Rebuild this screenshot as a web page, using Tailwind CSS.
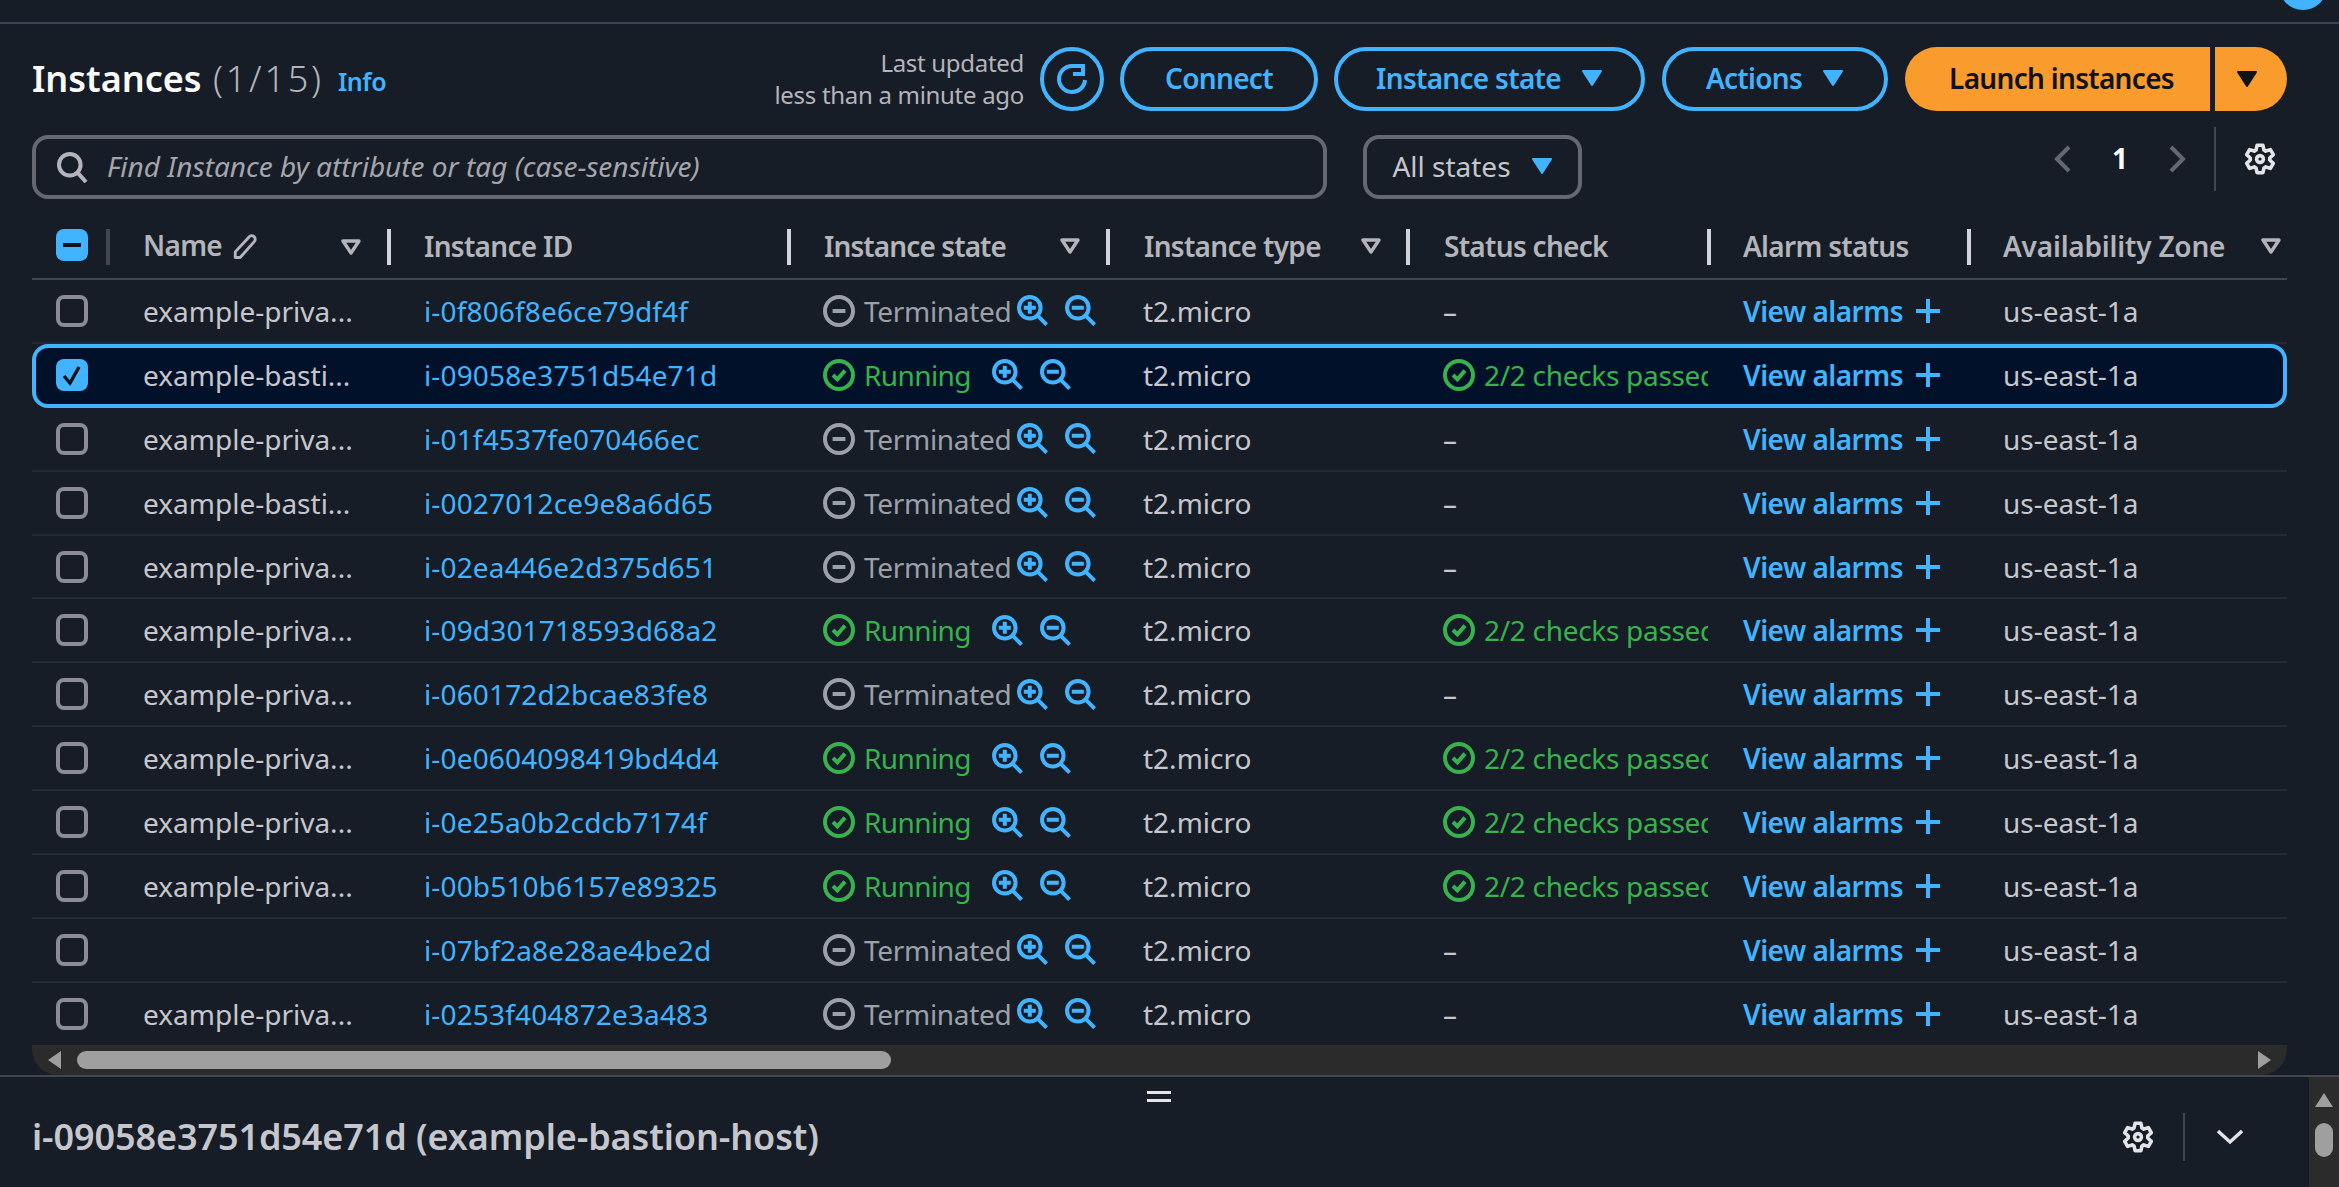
<!DOCTYPE html>
<html lang="en">
<head>
    <meta charset="UTF-8">
    <title>Instances</title>
    <script src="https://cdn.jsdelivr.net/npm/@tailwindcss/browser@4"></script>
</head>
<body class="bg-[#161d26]">
<div class="relative h-[1187px] w-[2339px] overflow-hidden bg-[#161d26] font-['Noto_Sans',sans-serif] text-[28px] text-[#c6c6cd]">
    <div class="absolute right-[12px] top-[-38px] h-[48px] w-[48px] rounded-full bg-[#42b4ff]"></div>
    <div class="h-[24px] border-b-2 border-[#3f4450]"></div>

    <!-- page header -->
    <div class="mt-[23px] flex h-[64px] items-center pl-[32px] pr-[52px]">
        <h1 class="text-[36px] font-semibold text-[#fbfbfb]">Instances <span class="ml-[2px] font-light tracking-[2.8px] text-[#b4b4bb]">(1/15)</span></h1>
        <a class="ml-[14px] mt-[6px] text-[25px] font-semibold tracking-[-0.4px] text-[#42b4ff]">Info</a>
        <div class="ml-auto text-right text-[24px] leading-[32px] tracking-[-0.3px] text-[#b4b4bb]">Last updated<br>less than a minute ago</div>
        <button class="ml-[16px] flex h-[64px] w-[64px] items-center justify-center rounded-full border-4 border-[#42b4ff]">
            <svg class="h-[32px] w-[32px]" viewBox="0 0 16 16" fill="none" stroke="#42b4ff" stroke-width="2"><path d="M14.5 8.5A6.5 6.5 0 1 1 8 1.5h5.5"/><path d="M13.5 0.5v5h-5"/></svg>
        </button>
        <button class="ml-[16px] h-[64px] w-[198px] rounded-full border-4 border-[#42b4ff] pb-[2px] font-semibold tracking-[-0.7px] text-[#42b4ff]">Connect</button>
        <button class="ml-[16px] flex h-[64px] w-[311px] items-center justify-center gap-[20px] rounded-full border-4 border-[#42b4ff] pb-[2px] font-semibold tracking-[-0.7px] text-[#42b4ff]">Instance state <svg class="h-[16px] w-[22px]" viewBox="0 0 22 16"><path d="M2 1h18L11 15z" fill="#42b4ff" stroke="#42b4ff" stroke-width="2" stroke-linejoin="round"/></svg></button>
        <button class="ml-[17px] flex h-[64px] w-[226px] items-center justify-center gap-[20px] rounded-full border-4 border-[#42b4ff] pb-[2px] font-semibold tracking-[-0.7px] text-[#42b4ff]">Actions <svg class="h-[16px] w-[22px]" viewBox="0 0 22 16"><path d="M2 1h18L11 15z" fill="#42b4ff" stroke="#42b4ff" stroke-width="2" stroke-linejoin="round"/></svg></button>
        <button class="ml-[17px] h-[64px] w-[305px] rounded-l-full bg-[#fa9b2d] pb-[2px] pl-[8px] font-semibold tracking-[-0.7px] text-[#0f141a]">Launch instances</button>
        <button class="ml-[5px] flex h-[64px] w-[72px] items-center justify-center rounded-r-full bg-[#fa9b2d] pr-[8px]"><svg class="h-[16px] w-[22px]" viewBox="0 0 22 16"><path d="M2 1h18L11 15z" fill="#0f141a" stroke="#0f141a" stroke-width="2" stroke-linejoin="round"/></svg></button>
    </div>

    <!-- filter row -->
    <div class="mt-[24px] flex h-[64px] items-center pl-[32px] pr-[52px]">
        <div class="flex h-[64px] w-[1295px] items-center rounded-[16px] border-4 border-[#656871] pl-[20px]">
            <svg class="h-[32px] w-[32px]" viewBox="0 0 16 16" fill="none" stroke="#b4b4bb" stroke-width="2"><circle cx="6.9" cy="6.9" r="5.4"/><path d="m10.8 10.8 4.2 4.7"/></svg>
            <span class="-mt-[2px] ml-[19px] italic text-[#a5a5ad]">Find Instance by attribute or tag (case-sensitive)</span>
        </div>
        <button class="ml-[36px] flex h-[64px] w-[219px] items-center justify-center gap-[20px] rounded-[16px] border-4 border-[#656871] pb-[2px] text-[#c6c6cd]">All states <svg class="h-[16px] w-[22px]" viewBox="0 0 22 16"><path d="M2 1h18L11 15z" fill="#42b4ff" stroke="#42b4ff" stroke-width="2" stroke-linejoin="round"/></svg></button>
        <div class="mb-[16px] ml-auto mr-[11px] flex h-[64px] items-center">
            <svg class="h-[32px] w-[32px]" viewBox="0 0 16 16" fill="none" stroke="#656871" stroke-width="2"><path d="M10.5 2 4.5 8l6 6"/></svg>
            <span class="mx-[32px] -mt-[2px] w-[16px] text-center font-bold text-[#fbfbfb]">1</span>
            <svg class="h-[32px] w-[32px]" viewBox="0 0 16 16" fill="none" stroke="#656871" stroke-width="2"><path d="m5.5 2 6 6-6 6"/></svg>
            <div class="ml-[22px] h-[64px] w-[2px] bg-[#424650]"></div>
            <svg data-gear class="ml-[28px] h-[32px] w-[32px]" viewBox="0 0 16 16" fill="none" stroke="#e3e3e8" stroke-width="1.8" stroke-linejoin="round"></svg>
        </div>
    </div>

    <!-- table -->
    <div class="mx-[32px] mt-[30px] grid h-[51px] w-[2255px] grid-cols-[78px_281px_400px_319px_300px_301px_260px_316px] items-start border-b-2 border-[#424650] font-semibold tracking-[-0.7px] text-[#b4b4bb]">
        <div class="flex h-[36px] items-start border-r-4 border-[#424650] pl-[24px]">
            <div class="flex h-[32px] w-[32px] items-center justify-center rounded-lg bg-[#42b4ff]"><div class="h-[4px] w-[18px] bg-[#0f141a]"></div></div>
        </div>
        <div class="flex h-[36px] items-center border-r-4 border-[#d1d5db] pl-[33px] pr-[26px]">
            <span class="-mt-[5px]">Name</span>
            <svg class="ml-[10px] h-[26px] w-[26px]" viewBox="0 0 16 16" fill="none" stroke="#b4b4bb" stroke-width="1.8" stroke-linejoin="round"><path d="M2 14.5V11L10.5 1.8a1.6 1.6 0 0 1 3.2 2.9L5 14.5z"/></svg>
            <svg class="ml-auto h-[16px] w-[20px]" viewBox="0 0 20 16" fill="none" stroke="#b4b4bb" stroke-width="3.4" stroke-linejoin="round"><path d="M2 2h16L10 14z"/></svg>
        </div>
        <div class="flex h-[36px] items-center border-r-4 border-[#d1d5db] pb-[2px] pl-[33px]">Instance ID</div>
        <div class="flex h-[36px] items-center border-r-4 border-[#d1d5db] pb-[2px] pl-[33px] pr-[26px]"><span class="tracking-[-0.9px]">Instance state</span>
            <svg class="ml-auto h-[16px] w-[20px]" viewBox="0 0 20 16" fill="none" stroke="#b4b4bb" stroke-width="3.4" stroke-linejoin="round"><path d="M2 2h16L10 14z"/></svg>
        </div>
        <div class="flex h-[36px] items-center border-r-4 border-[#d1d5db] pb-[2px] pl-[34px] pr-[25px]">Instance type
            <svg class="ml-auto h-[16px] w-[20px]" viewBox="0 0 20 16" fill="none" stroke="#b4b4bb" stroke-width="3.4" stroke-linejoin="round"><path d="M2 2h16L10 14z"/></svg>
        </div>
        <div class="flex h-[36px] items-center border-r-4 border-[#d1d5db] pb-[2px] pl-[34px]">Status check</div>
        <div class="flex h-[36px] items-center border-r-4 border-[#d1d5db] pb-[2px] pl-[32px]">Alarm status</div>
        <div class="flex h-[36px] items-center pb-[2px] pl-[32px] pr-[6px]"><span class="tracking-[-0.2px]">Availability Zone</span>
            <svg class="ml-auto h-[16px] w-[20px]" viewBox="0 0 20 16" fill="none" stroke="#b4b4bb" stroke-width="3.4" stroke-linejoin="round"><path d="M2 2h16L10 14z"/></svg>
        </div>
    </div>
    <div id="rows" class="mx-[32px] h-[765px] w-[2255px] overflow-hidden"></div>

    <!-- horizontal scrollbar -->
    <div class="mx-[32px] flex h-[30px] w-[2255px] items-start rounded-b-[26px] bg-[#2b2b2b]">
        <svg class="ml-[15px] mt-[6px] h-[18px] w-[14px]" viewBox="0 0 14 18"><path d="M14 0v18L1 9z" fill="#9f9f9f"/></svg>
        <div class="ml-[16px] mt-[6px] h-[18px] w-[814px] rounded-[9px] bg-[#9f9f9f]"></div>
        <svg class="ml-auto mr-[15px] mt-[6px] h-[18px] w-[14px]" viewBox="0 0 14 18"><path d="M0 0v18L13 9z" fill="#9f9f9f"/></svg>
    </div>

    <!-- split panel -->
    <div class="relative flex h-[112px] border-t-2 border-[#424650]">
        <div class="absolute left-[1147px] top-[14px] flex h-[11px] w-[24px] flex-col justify-between">
            <div class="h-[3px] bg-[#e3e3e8]"></div>
            <div class="h-[3px] bg-[#e3e3e8]"></div>
        </div>
        <div class="flex flex-1 items-center pl-[32px] pr-[66px] pt-[10px]">
            <h2 class="text-[36px] font-semibold tracking-[-0.1px] text-[#c6c6cd]">i-09058e3751d54e71d (example-bastion-host)</h2>
            <svg data-gear class="ml-auto h-[32px] w-[32px]" viewBox="0 0 16 16" fill="none" stroke="#e3e3e8" stroke-width="1.8" stroke-linejoin="round"></svg>
            <div class="ml-[29px] h-[48px] w-[2px] bg-[#424650]"></div>
            <svg class="ml-[32px] h-[26px] w-[26px]" viewBox="0 0 26 26" fill="none" stroke="#e3e3e8" stroke-width="3.4"><path d="m1 7 12 11L25 7"/></svg>
        </div>
        <div class="flex w-[30px] flex-col items-center bg-[#2b2b2b] pt-[16px]">
            <svg class="h-[14px] w-[18px]" viewBox="0 0 18 14"><path d="M9 0 18 14H0z" fill="#9f9f9f"/></svg>
            <div class="mt-[16px] h-[34px] w-[18px] rounded-[9px] bg-[#9f9f9f]"></div>
        </div>
    </div>
</div>

<script>
    const data = [
        ['example-priva...', 'i-0f806f8e6ce79df4f', 'T'],
        ['example-basti...', 'i-09058e3751d54e71d', 'R', true],
        ['example-priva...', 'i-01f4537fe070466ec', 'T'],
        ['example-basti...', 'i-0027012ce9e8a6d65', 'T'],
        ['example-priva...', 'i-02ea446e2d375d651', 'T'],
        ['example-priva...', 'i-09d301718593d68a2', 'R'],
        ['example-priva...', 'i-060172d2bcae83fe8', 'T'],
        ['example-priva...', 'i-0e0604098419bd4d4', 'R'],
        ['example-priva...', 'i-0e25a0b2cdcb7174f', 'R'],
        ['example-priva...', 'i-00b510b6157e89325', 'R'],
        ['', 'i-07bf2a8e28ae4be2d', 'T'],
        ['example-priva...', 'i-0253f404872e3a483', 'T']
    ];

    const okIcon = '<svg class="h-[32px] w-[32px] shrink-0" viewBox="0 0 16 16" fill="none" stroke="#37b24d" stroke-width="2"><circle cx="8" cy="8" r="7"/><path d="m5 8 2.2 2.2L11 5.8"/></svg>';
    const stopIcon = '<svg class="h-[32px] w-[32px] shrink-0" viewBox="0 0 16 16" fill="none" stroke="#9ba0a9" stroke-width="2"><circle cx="8" cy="8" r="7"/><path d="M4.8 8h6.4"/></svg>';
    const zoomIn = '<svg class="h-[32px] w-[32px]" viewBox="0 0 16 16" fill="none" stroke="#42b4ff" stroke-width="2"><circle cx="6.9" cy="6.9" r="5.4"/><path d="m10.8 10.8 4.5 4.5M3.9 6.9h6M6.9 3.9v6"/></svg>';
    const zoomOut = '<svg class="h-[32px] w-[32px]" viewBox="0 0 16 16" fill="none" stroke="#42b4ff" stroke-width="2"><circle cx="6.9" cy="6.9" r="5.4"/><path d="m10.8 10.8 4.5 4.5M3.9 6.9h6"/></svg>';
    const plusIcon = '<svg class="ml-[13px] h-[24px] w-[24px]" viewBox="0 0 24 24" fill="none" stroke="#42b4ff" stroke-width="4"><path d="M0 12h24M12 0v24"/></svg>';

    document.getElementById('rows').innerHTML = data.map(([name, id, state, selected]) => {
        const running = state === 'R';
        const box = selected
            ? '<div class="flex h-[32px] w-[32px] items-center justify-center rounded-lg bg-[#42b4ff]"><svg class="h-[22px] w-[22px]" viewBox="0 0 22 22" fill="none" stroke="#0f141a" stroke-width="3.4"><path d="m3 12 6 7L18 3"/></svg></div>'
            : '<div class="h-[32px] w-[32px] rounded-lg border-4 border-[#8c8c94]"></div>';
        const overlay = selected
            ? '<div class="absolute inset-x-0 -bottom-[2px] top-0 rounded-[16px] border-4 border-[#42b4ff] bg-[#001129]"></div>'
            : '';
        return `
        <div class="relative grid h-[63.9px] grid-cols-[78px_281px_400px_319px_300px_301px_260px_316px] items-center whitespace-nowrap border-b-2 ${selected ? 'border-transparent' : 'border-[#262b33]'}">
            ${overlay}
            <div class="relative pl-[24px]">${box}</div>
            <div class="relative pl-[33px]">${name}</div>
            <div class="relative pl-[33px] tracking-[0.15px] text-[#42b4ff]">${id}</div>
            <div class="relative flex items-center pl-[32px]">
                ${running ? okIcon : stopIcon}
                <span class="ml-[9px] ${running ? 'w-[127px] tracking-[-0.6px] text-[#37b24d]' : 'w-[152px] tracking-[-0.3px] text-[#9ba0a9]'}">${running ? 'Running' : 'Terminated'}</span>
                <span class="-mt-[1px] flex gap-[16px]">${zoomIn}${zoomOut}</span>
            </div>
            <div class="relative pl-[33px]">t2.micro</div>
            <div class="relative mr-[3px] flex items-center overflow-hidden pl-[33px]">
                ${running ? okIcon + '<span class="ml-[9px] tracking-[-0.3px] text-[#37b24d]">2/2 checks passed</span>' : '–'}
            </div>
            <div class="relative flex items-center pl-[32px] font-semibold tracking-[-0.5px] text-[#42b4ff]">View alarms${plusIcon}</div>
            <div class="relative pl-[32px]">us-east-1a</div>
        </div>`;
    }).join('');

    // six lobed gear, same for both settings buttons
    const pts = [];
    for (let i = 0; i < 6; i++) {
        const a = -90 + i * 60;
        [[-24, 4.9], [-12, 7], [12, 7], [24, 4.9]].forEach(([o, r]) => {
            const t = (a + o) * Math.PI / 180;
            pts.push((8 + r * Math.cos(t)).toFixed(2) + ' ' + (8 + r * Math.sin(t)).toFixed(2));
        });
    }
    document.querySelectorAll('[data-gear]').forEach(g => {
        g.innerHTML = '<path d="M' + pts.join('L') + 'z"/><circle cx="8" cy="8" r="1.7"/>';
    });
</script>
</body>
</html>
